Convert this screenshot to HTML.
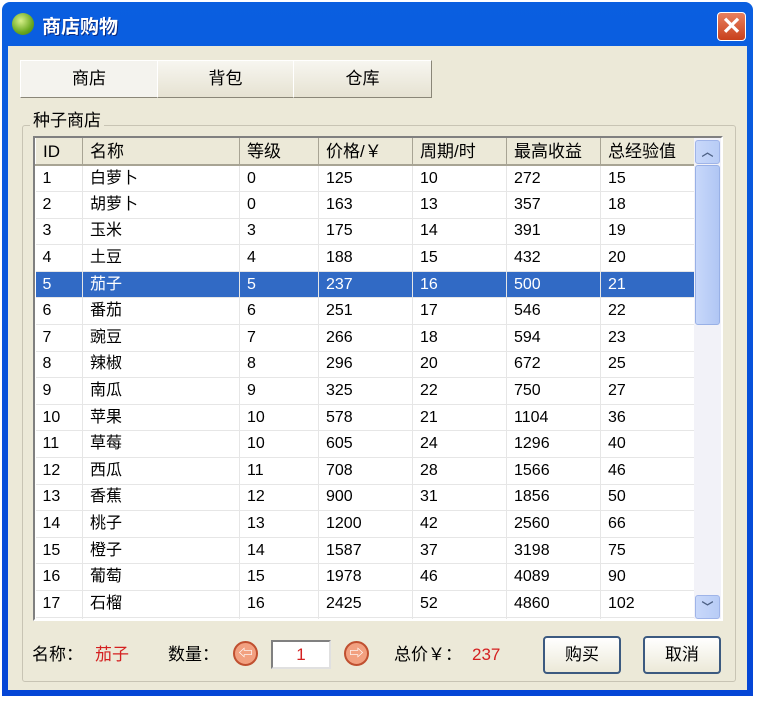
<!DOCTYPE html>
<html><head><meta charset="utf-8"><style>
*{margin:0;padding:0;box-sizing:border-box}
body{width:757px;height:701px;background:#fff;position:relative;overflow:hidden;font-family:"Liberation Sans","Noto Sans CJK SC","WenQuanYi Zen Hei",sans-serif;font-size:16px;color:#000}
.win{position:absolute;left:2px;top:2px;width:751px;height:694px;background:linear-gradient(#0a5fe0,#0546d6);border-radius:8px 8px 0 0}
.title{position:absolute;left:40px;top:10px;color:#fff;font-weight:bold;font-size:19px;text-shadow:1px 1px #0a2a80}
.ico{position:absolute;left:10px;top:11px;width:22px;height:22px;border-radius:50%;background:radial-gradient(circle at 40% 35%,#d8f08a,#6aa820 60%,#3d7a10)}
.close{position:absolute;left:715px;top:10px;width:29px;height:29px;border:1px solid #fff;border-radius:4px;background:linear-gradient(#e8805e,#c8401c);color:#fff;font-size:24px;text-align:center;line-height:27px;font-weight:bold}
.client{position:absolute;left:6px;top:44px;width:739px;height:644px;background:#ece9d8}
.tab{position:absolute;top:60px;height:38px;background:linear-gradient(#f7f6f0,#e6e2d2);border:1px solid #a09c8c;border-color:#fff #8a8678 #8a8678 #fff;text-align:center;line-height:36px;font-size:17px}
.group{position:absolute;left:22px;top:125px;width:714px;height:557px;border:1px solid #c8c4b4;border-radius:3px}
.glabel{position:absolute;left:30px;top:106px;background:#ece9d8;padding:0 3px;font-size:17px}
.tbl{position:absolute;left:33px;top:136px;width:690px;height:485px;border:2px solid;border-color:#808080 #fff #fff #808080;background:#fff;overflow:hidden}
table{border-collapse:collapse;position:absolute;left:0;top:0;font-size:16px;table-layout:fixed}
td,th{height:26.6px;padding:0 0 0 7px;text-align:left;font-weight:normal;border-right:1px solid #e6e6e6;border-bottom:1px solid #e6e6e6;white-space:nowrap;line-height:1;vertical-align:middle}
td span,th span{display:inline-block;vertical-align:middle;line-height:1}
th{height:27px;background:#ece9d8;border-right:1px solid #a8a494;border-bottom:2px solid #a8a494;border-left:1px solid #fff;font-size:17px}
tr.sel td{background:#316ac5;color:#fff}
.sb{position:absolute;left:659px;top:0;width:27px;height:481px;background:#f2f2f8}
.sbb{position:absolute;left:1px;width:25px;height:24px;border-radius:3px;background:linear-gradient(90deg,#c8d8fa,#b8ccf6);border:1px solid #9fb4e8;color:#4d6185;font-size:12px;text-align:center;line-height:22px;font-weight:bold}
.thumb{position:absolute;left:1px;top:27px;width:25px;height:160px;border-radius:3px;background:linear-gradient(90deg,#c8d8fa,#b0c6f4);border:1px solid #98b0e6}
.bot{position:absolute;top:644px;font-size:17px;line-height:22px}
.red{color:#d42020}
.circ{position:absolute;top:641px;width:25px;height:25px;border-radius:50%;background:#f2a080;border:2px solid #c05030;color:#fff;font-size:14px;text-align:center;line-height:21px;font-weight:bold}
.inp{position:absolute;left:271px;top:640px;width:60px;height:29px;background:#fff;border:2px solid;border-color:#808080 #e0e0e0 #e0e0e0 #808080;text-align:center;color:#d42020;line-height:25px;font-size:17px}
.btn{position:absolute;top:636px;width:78px;height:38px;border:2px solid #3c5a80;border-radius:4px;background:linear-gradient(#fff,#ece9d8);text-align:center;line-height:33px;font-size:17px}
</style></head><body>
<div class="win">
<div class="ico"></div><div class="title">商店购物</div>
<div class="close">✕</div>
<div class="client"></div>
</div>
<div class="tab" style="left:20px;width:138px;background:#f4f3ee">商店</div>
<div class="tab" style="left:157px;width:137px">背包</div>
<div class="tab" style="left:293px;width:139px">仓库</div>
<div class="group"></div>
<div class="glabel">种子商店</div>
<div class="tbl">
<table style="width:659px">
<colgroup><col style="width:47px"><col style="width:157px"><col style="width:79px"><col style="width:94px"><col style="width:94px"><col style="width:94px"><col style="width:94px"></colgroup>
<tr><th>ID</th><th>名称</th><th>等级</th><th>价格/￥</th><th>周期/时</th><th>最高收益</th><th>总经验值</th></tr>
<tr><td>1</td><td>白萝卜</td><td>0</td><td>125</td><td>10</td><td>272</td><td>15</td></tr>
<tr><td>2</td><td>胡萝卜</td><td>0</td><td>163</td><td>13</td><td>357</td><td>18</td></tr>
<tr><td>3</td><td>玉米</td><td>3</td><td>175</td><td>14</td><td>391</td><td>19</td></tr>
<tr><td>4</td><td>土豆</td><td>4</td><td>188</td><td>15</td><td>432</td><td>20</td></tr>
<tr class="sel"><td>5</td><td>茄子</td><td>5</td><td>237</td><td>16</td><td>500</td><td>21</td></tr>
<tr><td>6</td><td>番茄</td><td>6</td><td>251</td><td>17</td><td>546</td><td>22</td></tr>
<tr><td>7</td><td>豌豆</td><td>7</td><td>266</td><td>18</td><td>594</td><td>23</td></tr>
<tr><td>8</td><td>辣椒</td><td>8</td><td>296</td><td>20</td><td>672</td><td>25</td></tr>
<tr><td>9</td><td>南瓜</td><td>9</td><td>325</td><td>22</td><td>750</td><td>27</td></tr>
<tr><td>10</td><td>苹果</td><td>10</td><td>578</td><td>21</td><td>1104</td><td>36</td></tr>
<tr><td>11</td><td>草莓</td><td>10</td><td>605</td><td>24</td><td>1296</td><td>40</td></tr>
<tr><td>12</td><td>西瓜</td><td>11</td><td>708</td><td>28</td><td>1566</td><td>46</td></tr>
<tr><td>13</td><td>香蕉</td><td>12</td><td>900</td><td>31</td><td>1856</td><td>50</td></tr>
<tr><td>14</td><td>桃子</td><td>13</td><td>1200</td><td>42</td><td>2560</td><td>66</td></tr>
<tr><td>15</td><td>橙子</td><td>14</td><td>1587</td><td>37</td><td>3198</td><td>75</td></tr>
<tr><td>16</td><td>葡萄</td><td>15</td><td>1978</td><td>46</td><td>4089</td><td>90</td></tr>
<tr><td>17</td><td>石榴</td><td>16</td><td>2425</td><td>52</td><td>4860</td><td>102</td></tr>
<tr><td></td><td></td><td></td><td></td><td></td><td></td><td></td></tr>
</table>
<div class="sb"><div class="sbb" style="top:2px">︿</div><div class="thumb"></div><div class="sbb" style="top:457px">﹀</div></div>
</div>
<div class="bot" style="left:32px">名称：</div>
<div class="bot red" style="left:95px">茄子</div>
<div class="bot" style="left:168px">数量：</div>
<div class="circ" style="left:233px">⇦</div>
<div class="inp">1</div>
<div class="circ" style="left:344px">⇨</div>
<div class="bot" style="left:394px">总价￥：</div>
<div class="bot red" style="left:472px">237</div>
<div class="btn" style="left:543px">购买</div>
<div class="btn" style="left:643px">取消</div>
</body></html>
